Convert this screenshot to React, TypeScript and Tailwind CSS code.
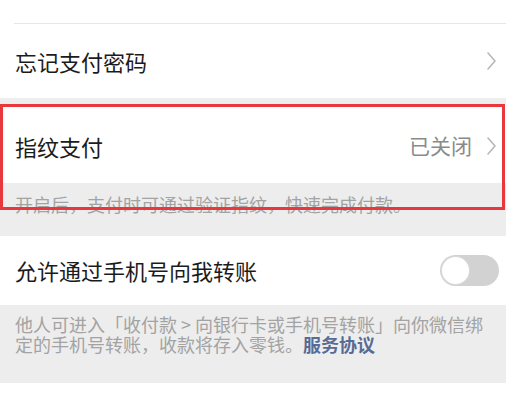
const font = { fontFamily: '"Noto Sans CJK SC", "Noto Sans", sans-serif' }

const Chevron = () => (
  <svg width="11" height="20" viewBox="0 0 11 20" fill="none">
    <polyline points="2,2 9,10 2,18" stroke="#b8b8b8" strokeWidth="1.6" strokeLinecap="round" strokeLinejoin="round" />
  </svg>
)

export default function App() {
  return (
    <div className="w-[506px] h-[397px] overflow-hidden bg-[#ededed]" style={font}>
      {/* password row */}
      <div className="bg-white">
        <div className="h-[23px]" />
        <div className="ml-[14px] h-px bg-[#e6e6e6]" />
        <div className="h-[74px] flex items-center justify-between pl-[15px] pr-[9px]">
          <span className="text-[22px] text-[#1b1b1b]">忘记支付密码</span>
          <Chevron />
        </div>
      </div>

      <div className="h-[6px]" />

      {/* fingerprint, highlighted */}
      <div className="relative">
        <div className="bg-white h-[79px] flex items-center justify-between pl-[15px] pr-[9px] pt-[5px]">
          <span className="text-[22px] text-[#1b1b1b]">指纹支付</span>
          <div className="flex items-center gap-[14px]">
            <span className="text-[21px] text-[#8a8a8a]">已关闭</span>
            <Chevron />
          </div>
        </div>
        <div className="h-[53px] pl-[15px] pt-[9px]">
          <p className="text-[18px] leading-[24px] text-[#a3a3a3]">开启后，支付时可通过验证指纹，快速完成付款。</p>
        </div>
        <div className="absolute left-0 top-0 w-[505px] h-[106px] border-[3px] border-[#e8383d]" />
      </div>

      {/* phone transfer */}
      <div className="bg-white h-[69px] flex items-center justify-between pl-[15px] pr-[7px]">
        <span className="text-[22px] text-[#1b1b1b]">允许通过手机号向我转账</span>
        <div className="w-[59px] h-[31px] rounded-full bg-[#d2d2d2] p-[2px] flex items-center">
          <div className="w-[27px] h-[27px] rounded-full bg-white shadow-[0_0_0_1px_#d9d9d9]" />
        </div>
      </div>
      <div className="h-[78px] pl-[15px] pt-[9px]">
        <p className="w-[476px] text-[18px] leading-[20px] text-[#a3a3a3]">
          他人可进入「收付款 &gt; 向银行卡或手机号转账」向你微信绑定的手机号转账，收款将存入零钱。
          <span className="font-bold text-[#576b95]">服务协议</span>
        </p>
      </div>
      <div className="bg-white h-[20px]" />
    </div>
  )
}
